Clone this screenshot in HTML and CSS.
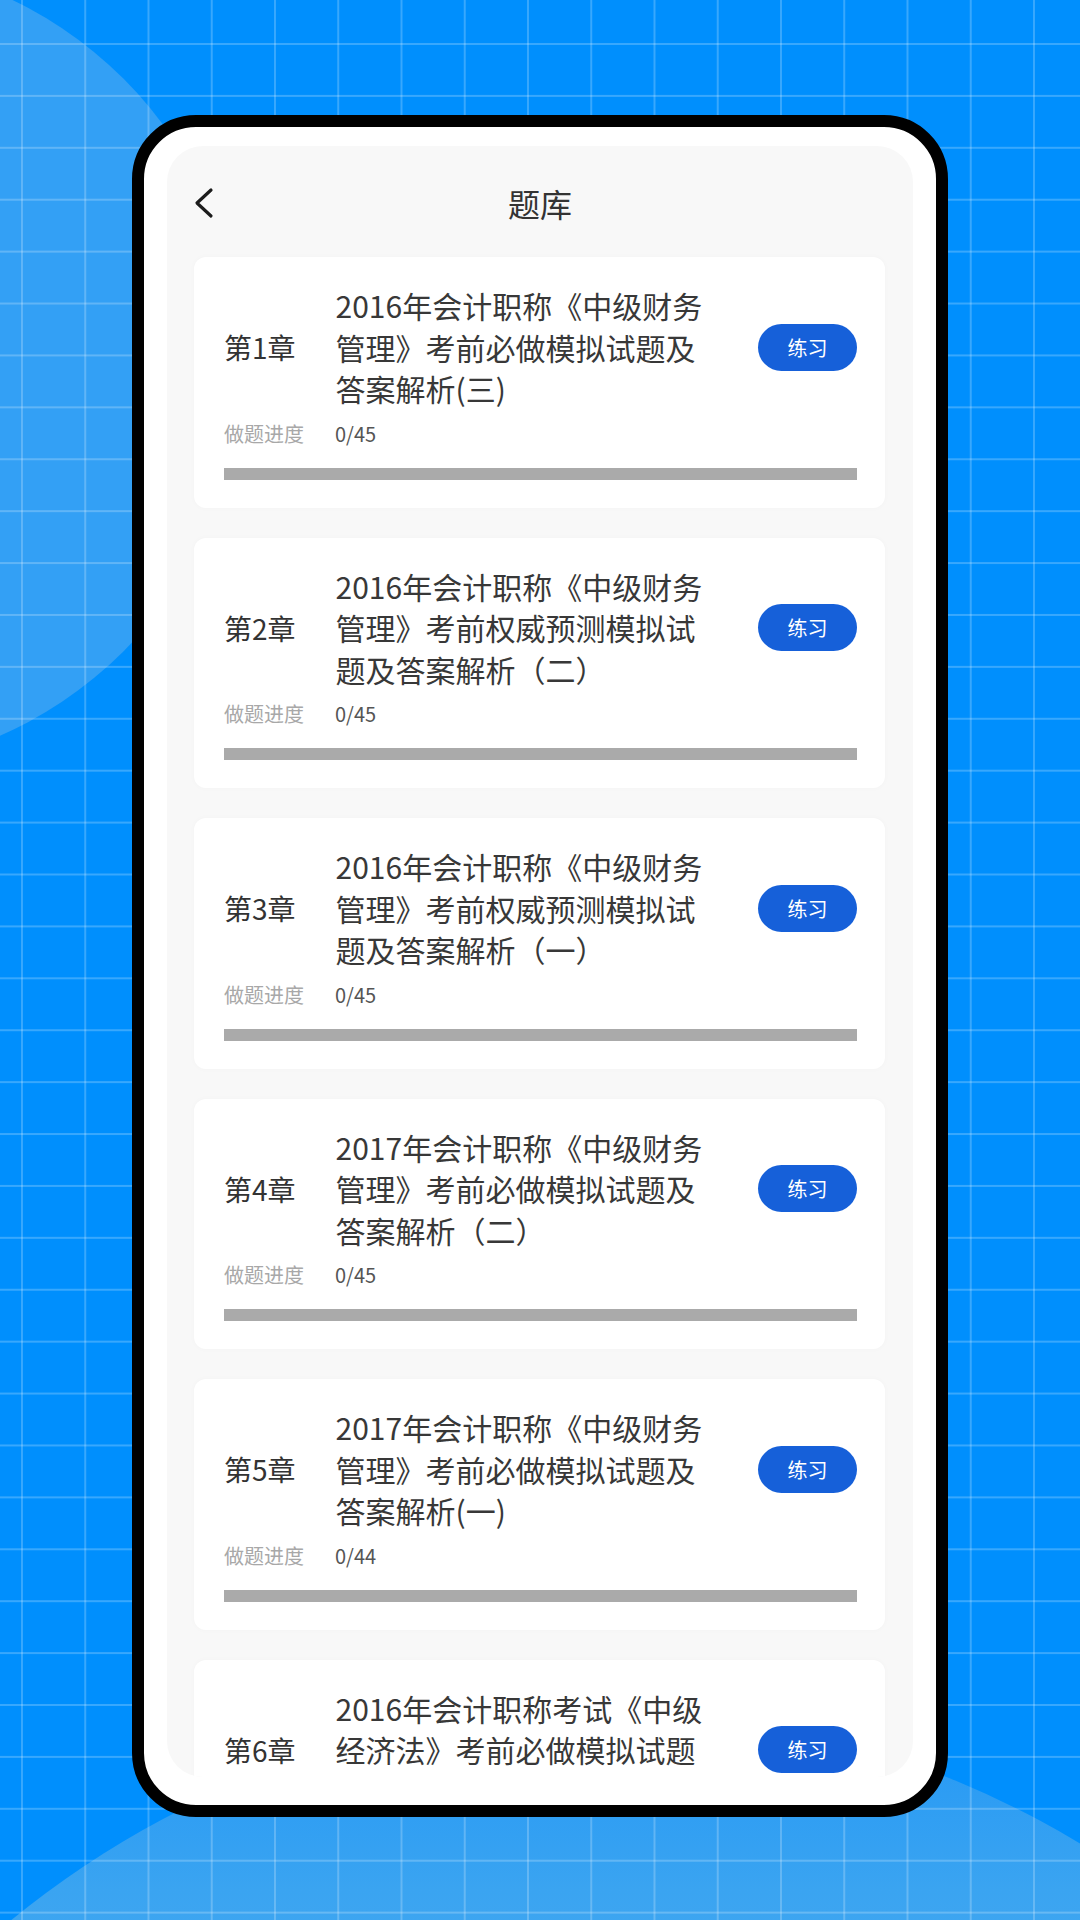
FILE: index.html
```html
<!DOCTYPE html>
<html lang="zh-CN">
  <head>
    <meta charset="UTF-8" />
    <meta name="viewport" content="width=device-width, initial-scale=1" />
    <title>题库</title>
    <link rel="stylesheet" href="styles.css">
  </head>
  <body>
    <!-- backdrop: two soft discs under a thin grid -->
    <div class="backdrop">
      <div class="bg-disc bg-disc-top"></div>
      <div class="bg-disc bg-disc-bottom"></div>
      <div class="bg-grid"></div>
    </div>

    <div class="phone">
      <div class="app">
        <header class="topbar">
          <button class="back-btn" aria-label="返回">
            <svg width="20" height="32" viewBox="0 0 20 32">
              <polyline points="17,3 3,16 17,29" fill="none" stroke="#1c1c1c" stroke-width="3.2" stroke-linecap="round" stroke-linejoin="round" />
            </svg>
          </button>
          <h1>题库</h1>
          <span></span>
        </header>

        <div class="chapter-list">
          <div class="chapter-card">
            <div class="chapter-main">
              <span class="chapter-no">第1章</span>
              <p class="chapter-title">2016年会计职称《中级财务<br>管理》考前必做模拟试题及<br>答案解析(三)</p>
              <button class="practice-btn">练习</button>
            </div>
            <div class="progress-row"><span class="progress-label">做题进度</span><span class="progress-count">0/45</span></div>
            <div class="progress-bar"><div class="progress-fill" style="width: 0%"></div></div>
          </div>

          <div class="chapter-card">
            <div class="chapter-main">
              <span class="chapter-no">第2章</span>
              <p class="chapter-title">2016年会计职称《中级财务<br>管理》考前权威预测模拟试<br>题及答案解析（二）</p>
              <button class="practice-btn">练习</button>
            </div>
            <div class="progress-row"><span class="progress-label">做题进度</span><span class="progress-count">0/45</span></div>
            <div class="progress-bar"><div class="progress-fill" style="width: 0%"></div></div>
          </div>

          <div class="chapter-card">
            <div class="chapter-main">
              <span class="chapter-no">第3章</span>
              <p class="chapter-title">2016年会计职称《中级财务<br>管理》考前权威预测模拟试<br>题及答案解析（一）</p>
              <button class="practice-btn">练习</button>
            </div>
            <div class="progress-row"><span class="progress-label">做题进度</span><span class="progress-count">0/45</span></div>
            <div class="progress-bar"><div class="progress-fill" style="width: 0%"></div></div>
          </div>

          <div class="chapter-card">
            <div class="chapter-main">
              <span class="chapter-no">第4章</span>
              <p class="chapter-title">2017年会计职称《中级财务<br>管理》考前必做模拟试题及<br>答案解析（二）</p>
              <button class="practice-btn">练习</button>
            </div>
            <div class="progress-row"><span class="progress-label">做题进度</span><span class="progress-count">0/45</span></div>
            <div class="progress-bar"><div class="progress-fill" style="width: 0%"></div></div>
          </div>

          <div class="chapter-card">
            <div class="chapter-main">
              <span class="chapter-no">第5章</span>
              <p class="chapter-title">2017年会计职称《中级财务<br>管理》考前必做模拟试题及<br>答案解析(一)</p>
              <button class="practice-btn">练习</button>
            </div>
            <div class="progress-row"><span class="progress-label">做题进度</span><span class="progress-count">0/44</span></div>
            <div class="progress-bar"><div class="progress-fill" style="width: 0%"></div></div>
          </div>

          <div class="chapter-card">
            <div class="chapter-main">
              <span class="chapter-no">第6章</span>
              <p class="chapter-title">2016年会计职称考试《中级<br>经济法》考前必做模拟试题<br>及答案解析（一）</p>
              <button class="practice-btn">练习</button>
            </div>
            <div class="progress-row"><span class="progress-label">做题进度</span><span class="progress-count">0/45</span></div>
            <div class="progress-bar"><div class="progress-fill" style="width: 0%"></div></div>
          </div>
        </div>
      </div>
    </div>
  </body>
</html>
```

FILE: styles.css
```css
html, body {
  margin: 0;  width: 1080px;  height: 1920px;  overflow: hidden;
}
body {
  position: relative;  background-color: #008ffd;
  font-family: "Noto Sans CJK SC", "Noto Sans", sans-serif;
}
/* backdrop */
.backdrop {
  position: absolute;  inset: 0;  overflow: hidden;
}
.bg-disc {
  position: absolute;  border-radius: 50%;
}
.bg-disc-top {
  left: -568px;  top: -40px;  width: 810px;  height: 810px;  background-color: #33a0f5;
}
.bg-disc-bottom {
  left: -330px;  top: 1710px;  width: 1860px;  height: 1860px;
  background: linear-gradient(#2397f5 0, #3aa4f1 180px, #4eadef 400px);
}
.bg-grid {
  position: absolute;  inset: 0;
  background-image:
    linear-gradient(to right, rgba(255, 255, 255, 0.22) 2px, transparent 2px),
    linear-gradient(to bottom, rgba(255, 255, 255, 0.22) 2px, transparent 2px);
  background-size: 63.25px 51.92px;
  background-position: 21px 43px;
}
/* device frame */
.phone {
  position: relative;  z-index: 1;  box-sizing: border-box;
  width: 816px;  height: 1702px;  margin: 115px auto 0;
  border: 12px solid #000;  border-radius: 64px;  background-color: #fff;
  padding: 19px 23px 28px;
}
.app {
  height: 100%;  background-color: #f8f8f8;  border-radius: 36px;  overflow: hidden;
}
.topbar {
  box-sizing: border-box;  height: 111px;  padding: 3px 29px 0;
  display: grid;  grid-template-columns: 1fr auto 1fr;  align-items: center;
}
.back-btn {
  justify-self: start;  background: none;  border: none;  padding: 0;  margin-left: -2px;
  display: flex;  cursor: pointer;
}
.topbar h1 {
  margin: 0;  font-size: 32px;  font-weight: 400;  line-height: 1;  color: #333;
}
.chapter-list {
  padding: 0 28px 0 27px;  display: flex;  flex-direction: column;  gap: 30px;
}
.chapter-card {
  background-color: #fff;  border-radius: 12px;  padding: 28px 28px 28px 30px;
  box-shadow: 0 0 6px rgba(0, 0, 0, 0.025);
}
.chapter-main {
  display: flex;  align-items: center;
}
.chapter-no {
  font-size: 28px;  line-height: 1;  color: #333;  margin-right: 40px;
}
.chapter-title {
  margin: 0;  font-size: 30px;  line-height: 41.5px;  color: #383838;  white-space: nowrap;
}
.practice-btn {
  margin-left: auto;  width: 99px;  height: 47px;  border: none;  border-radius: 24px;
  background-color: #1660d9;  color: #fff;  font-family: inherit;  font-size: 20px;  cursor: pointer;
}
.progress-row {
  margin-top: 12px;  display: flex;  font-size: 20px;  line-height: 24px;
}
.progress-label {
  width: 111px;  color: #a8a8a8;
}
.progress-count {
  color: #555;
}
.progress-bar {
  margin-top: 22px;  height: 12px;  background-color: #aaa;
}
.progress-fill {
  height: 100%;  background-color: #1660d9;
}
```
